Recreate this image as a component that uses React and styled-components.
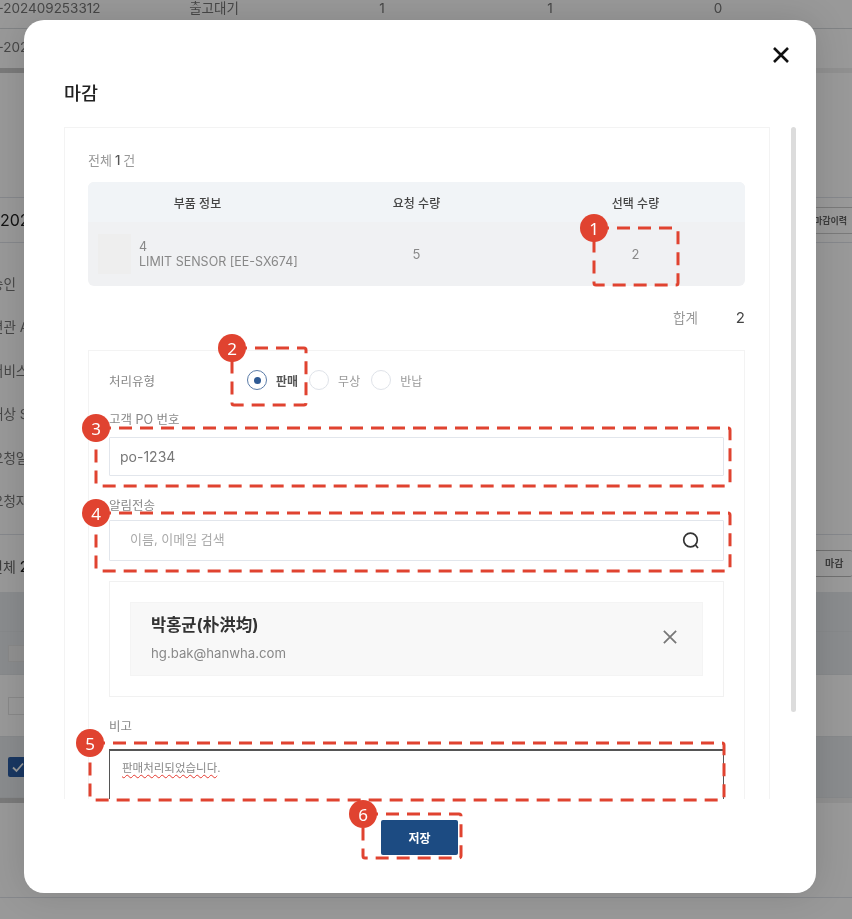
import React from "react";
import styled, { createGlobalStyle } from "styled-components";

const GlobalStyle = createGlobalStyle`
  html, body {
    margin: 0;
    padding: 0;
    background: #fff;
    font-family: Inter, "Noto Sans CJK KR", sans-serif;
  }
  * {
    box-sizing: border-box;
  }
`;

const Page = styled.div`
  position: relative;
  width: 852px;
  height: 919px;
  overflow: hidden;
  background: #fff;
  color: #777;
  filter: blur(0.35px);
`;

/* page behind the dialog */
const BgRow = styled.div`
  display: grid;
  grid-template-columns: repeat(5, 168px);
  align-items: start;
  justify-items: center;
  margin-left: -38px;
  height: ${(p) => p.$h}px;
  padding-top: ${(p) => p.$pt || 0}px;
  border-bottom: 1px solid #d8dade;
  font-size: 13.5px;
  line-height: 16px;
  color: #777;
`;

const BgCode = styled.span`
  margin-left: 6px;
`;

const BgScrollBand = styled.div`
  height: 5px;
  background: linear-gradient(90deg, #ccc 50%, #f0f0f0 50%);
  margin-top: ${(p) => (p.$overlap ? -5 : 0)}px;
`;

const BgSpacer = styled.div`
  height: ${(p) => p.$h}px;
`;

const BgHeading = styled.div`
  display: flex;
  align-items: center;
  justify-content: space-between;
  height: 46px;
  border-top: 1px solid #dfe3e9;
  border-bottom: 1px solid #dfe3e9;
  font-size: 16px;
  color: #222;
`;

const BgSmallButton = styled.span`
  display: flex;
  align-items: center;
  justify-content: flex-end;
  height: 27px;
  width: 60px;
  padding-right: 5px;
  border-top: 1px solid #ccc;
  border-bottom: 1px solid #ccc;
  font-size: 9px;
  font-weight: 600;
  color: #666;
`;

const BgInfoList = styled.div`
  display: flex;
  flex-direction: column;
  padding-top: 20px;
  height: 292px;
  border-bottom: 1px solid #dfe3e9;
`;

const BgInfoLabel = styled.div`
  height: 43.4px;
  line-height: 43.4px;
  margin-left: -9px;
  font-size: 13.5px;
  color: #777;
`;

const BgCount = styled.div`
  display: flex;
  align-items: center;
  justify-content: space-between;
  height: 57px;
  margin-left: -10px;
  padding-top: 5px;
  font-size: 14px;
  color: #666;
  b {
    color: #222;
    font-weight: 500;
  }
`;

const BgMarkButton = styled.span`
  width: 40px;
  height: 27px;
  margin-top: -5px;
  line-height: 25px;
  padding-left: 12px;
  border: 1px solid #bbb;
  border-right: 0;
  border-radius: 2px;
  font-size: 10px;
  font-weight: 600;
  color: #666;
`;

const BgTableRow = styled.div`
  display: flex;
  align-items: center;
  height: ${(p) => p.$h}px;
  padding-left: 8px;
  background: ${(p) => (p.$shade ? "#e6e9ed" : "#fff")};
  border-bottom: 1px solid #e2e4e8;
`;

const BgInputStub = styled.span`
  width: 40px;
  height: ${(p) => p.$h}px;
  background: ${(p) => (p.$filled ? "#f2f2f2" : "#fff")};
  border: 1px solid #e4e4e4;
`;

const BgCheck = styled.span`
  display: flex;
  align-items: center;
  justify-content: center;
  width: 20px;
  height: 20px;
  border-radius: 2px;
  background: #2a5da3;
`;

const BgBottomLine = styled.div`
  height: 95px;
  border-bottom: 1px solid #dfe3e9;
`;

const Dim = styled.div`
  position: absolute;
  inset: 0;
  background: rgba(0, 0, 0, 0.4);
`;

/* dialog */
const Modal = styled.div`
  position: absolute;
  left: 24px;
  top: 20px;
  display: flex;
  flex-direction: column;
  width: 792px;
  height: 873px;
  background: #fff;
  border-radius: 20px;
  box-shadow: 0 0 36px rgba(0, 0, 0, 0.14);
`;

const CloseButton = styled.button`
  position: absolute;
  right: 27px;
  top: 27px;
  display: flex;
  padding: 0;
  border: 0;
  background: none;
`;

const Title = styled.h2`
  height: 107px;
  margin: 0;
  padding: 59px 0 0 40px;
  font-size: 18.5px;
  line-height: 28px;
  font-weight: 500;
  color: #222;
`;

const ScrollArea = styled.div`
  display: flex;
  gap: 21px;
  height: 672px;
  margin-left: 40px;
  overflow: hidden;
`;

const Panel = styled.div`
  flex: none;
  width: 706px;
  padding: 22px 24px 0 23px;
  border: 1px solid #f3f3f3;
  border-bottom: 0;
`;

const ScrollThumb = styled.div`
  flex: none;
  width: 5px;
  height: 585px;
  border-radius: 3px;
  background: #dcdcdc;
`;

const CountLine = styled.div`
  margin-bottom: 12px;
  font-size: 13px;
  line-height: 20px;
  color: #999;
  b {
    margin: 0 3px;
    font-weight: 500;
    color: #555;
  }
`;

const Table = styled.div`
  width: 657px;
  border-radius: 6px;
  overflow: hidden;
  background: #f0f1f3;
`;

const HeadRow = styled.div`
  display: grid;
  grid-template-columns: repeat(3, 1fr);
  align-items: center;
  height: 40px;
  background: #f1f4f7;
  font-size: 12px;
  font-weight: 500;
  color: #444;
  text-align: center;
`;

const BodyRow = styled.div`
  display: grid;
  grid-template-columns: repeat(3, 1fr);
  align-items: center;
  height: 64px;
  font-size: 13px;
  color: #888;
  text-align: center;
`;

const PartCell = styled.div`
  display: flex;
  align-items: center;
  gap: 8px;
  padding-left: 10px;
  text-align: left;
  line-height: 15px;
  font-size: 12.5px;
`;

const PartThumb = styled.span`
  flex: none;
  width: 33px;
  height: 40px;
  background: #eeeeee;
`;

const PartText = styled.div`
  white-space: nowrap;
`;

const TotalRow = styled.div`
  display: flex;
  justify-content: flex-end;
  gap: 38px;
  width: 657px;
  margin: 22px 0;
  line-height: 20px;
  font-size: 13.5px;
  color: #999;
  b {
    font-size: 15px;
    font-weight: 400;
    color: #444;
  }
`;

const FormBox = styled.div`
  width: 657px;
  padding: 19px 20px 0;
  border: 1px solid #f3f3f3;
  border-bottom: 0;
`;

const TypeRow = styled.div`
  display: flex;
  align-items: center;
  height: 20px;
`;

const TypeLabel = styled.span`
  width: 138px;
  font-size: 12.5px;
  color: #888;
`;

const RadioOption = styled.label`
  display: flex;
  align-items: center;
  gap: 9px;
  margin-right: 11px;
  font-size: 12px;
  font-weight: ${(p) => (p.$checked ? 700 : 400)};
  color: ${(p) => (p.$checked ? "#555" : "#999")};
`;

const RadioMark = styled.span`
  display: flex;
  align-items: center;
  justify-content: center;
  width: 20px;
  height: 20px;
  border-radius: 50%;
  border: 1.5px solid ${(p) => (p.$checked ? "#5b7ca8" : "#dfe3e9")};
  &::after {
    content: "";
    display: ${(p) => (p.$checked ? "block" : "none")};
    width: 7px;
    height: 7px;
    border-radius: 50%;
    background: #2f5a94;
  }
`;

const FieldLabel = styled.div`
  margin-top: 21px;
  font-size: 12.5px;
  line-height: 18px;
  color: #888;
`;

const TextInput = styled.input`
  display: block;
  width: 100%;
  height: 39px;
  margin-top: 8px;
  padding: 0 10px;
  border: 1.5px solid #e2e6ec;
  border-radius: 1px;
  outline: none;
  background: #fff;
  font-family: inherit;
  font-size: 14px;
  color: #777;
`;

const SearchBox = styled.div`
  display: flex;
  align-items: center;
  justify-content: space-between;
  height: 41px;
  margin-top: 5px;
  padding: 0 22px 0 20px;
  border: 1.5px solid #e2e6ec;
  border-radius: 1px;
`;

const SearchInput = styled.input`
  flex: 1;
  border: 0;
  outline: none;
  padding: 0 0 3px;
  background: none;
  font-family: inherit;
  font-size: 13px;
  &::placeholder {
    color: #aaa;
    opacity: 1;
  }
`;

const RecipientBox = styled.div`
  margin-top: 20px;
  padding: 20px;
  border: 1px solid #f1f1f1;
`;

const RecipientCard = styled.div`
  display: flex;
  align-items: center;
  justify-content: space-between;
  height: 74px;
  padding: 0 25px 2px 20px;
  background: #f8f8f8;
  border: 1px solid #f4f4f4;
`;

const RecipientName = styled.div`
  font-size: 16.5px;
  line-height: 24px;
  font-weight: 700;
  color: #333;
`;

const RecipientMail = styled.div`
  margin-top: 6px;
  font-size: 13.2px;
  line-height: 20px;
  color: #888;
`;

const RecipientRemove = styled.span`
  display: flex;
  margin-bottom: 3px;
`;

const NoteLabel = styled(FieldLabel)`
  margin-bottom: 13px;
`;

const NoteArea = styled.div`
  height: 80px;
  padding: 8px 12px;
  border: 1.5px solid #555;
  border-top-width: 2px;
  font-size: 11.5px;
  line-height: 18px;
  color: #888;
`;

const SpellError = styled.span`
  text-decoration: underline wavy #e5392f 1.2px;
  text-underline-offset: 2px;
`;

const Footer = styled.div`
  display: flex;
  justify-content: center;
  padding: 21px 1px 0 0;
`;

const SaveButton = styled.button`
  width: 77px;
  height: 35px;
  border: 0;
  border-radius: 2px;
  background: #1c4b82;
  font-family: inherit;
  font-size: 12px;
  font-weight: 700;
  color: #fff;
`;

/* numbered red call-outs over the screenshot */
const CalloutFrame = styled.svg`
  position: absolute;
  left: ${(p) => p.$x}px;
  top: ${(p) => p.$y}px;
  overflow: visible;
`;

const CalloutBadge = styled.span`
  position: absolute;
  left: ${(p) => p.$x - 14}px;
  top: ${(p) => p.$y - 14}px;
  display: flex;
  align-items: center;
  justify-content: center;
  width: 28px;
  height: 28px;
  border-radius: 50%;
  background: #e04330;
  font-family: "Noto Sans", sans-serif;
  font-size: 17px;
  color: #fff;
`;

const callouts = [
  { n: 1, x: 594, y: 228, w: 84, h: 57 },
  { n: 2, x: 232, y: 348, w: 74, h: 57 },
  { n: 3, x: 96, y: 428, w: 634, h: 58 },
  { n: 4, x: 96, y: 513, w: 634, h: 58 },
  { n: 5, x: 90, y: 743, w: 634, h: 57 },
  { n: 6, x: 363, y: 814, w: 98, h: 44 },
];

const Callout = ({ n, x, y, w, h }) => (
  <>
    <CalloutFrame $x={x} $y={y} width={w} height={h}>
      <rect
        x="0"
        y="0"
        width={w}
        height={h}
        rx="2"
        fill="none"
        stroke="#e04330"
        strokeWidth="3"
        strokeDasharray="13 8"
      />
    </CalloutFrame>
    <CalloutBadge $x={x} $y={y}>
      {n}
    </CalloutBadge>
  </>
);

const CrossIcon = ({ size, weight, color }) => (
  <svg width={size} height={size} viewBox="0 0 16 16" fill="none">
    <path d="M1 1L15 15M15 1L1 15" stroke={color} strokeWidth={weight} />
  </svg>
);

const SearchIcon = () => (
  <svg width="20" height="20" viewBox="0 0 20 20" fill="none">
    <circle cx="9.5" cy="9" r="6.8" stroke="#333" strokeWidth="1.7" />
    <path d="M14.5 14L17 17" stroke="#333" strokeWidth="1.7" />
  </svg>
);

const Radio = ({ checked, children }) => (
  <RadioOption $checked={checked}>
    <RadioMark $checked={checked} />
    {children}
  </RadioOption>
);

export default function App() {
  return (
    <Page>
      <GlobalStyle />

      <BgRow $h={29}>
        <BgCode>-202409253312</BgCode>
        <span>출고대기</span>
        <span>1</span>
        <span>1</span>
        <span>0</span>
      </BgRow>
      <BgRow $h={44} $pt={10}>
        <BgCode>-202409253312</BgCode>
      </BgRow>
      <BgScrollBand $overlap />
      <BgSpacer $h={124} />
      <BgHeading>
        <span>2024</span>
        <BgSmallButton>마감이력</BgSmallButton>
      </BgHeading>
      <BgInfoList>
        <BgInfoLabel>승인</BgInfoLabel>
        <BgInfoLabel>연관 A</BgInfoLabel>
        <BgInfoLabel>서비스</BgInfoLabel>
        <BgInfoLabel>대상 S</BgInfoLabel>
        <BgInfoLabel>요청일</BgInfoLabel>
        <BgInfoLabel>요청자</BgInfoLabel>
      </BgInfoList>
      <BgCount>
        <span>
          전체 <b>2</b>
        </span>
        <BgMarkButton>마감</BgMarkButton>
      </BgCount>
      <BgTableRow $h={40} $shade />
      <BgTableRow $h={43} $shade>
        <BgInputStub $h={17} $filled />
      </BgTableRow>
      <BgTableRow $h={62}>
        <BgInputStub $h={18} />
      </BgTableRow>
      <BgTableRow $h={61} $shade>
        <BgCheck>
          <svg width="14" height="14" viewBox="0 0 14 14" fill="none">
            <path d="M2 7.5L5.5 11L12 3.5" stroke="#fff" strokeWidth="1.8" />
          </svg>
        </BgCheck>
      </BgTableRow>
      <BgScrollBand />
      <BgBottomLine />

      <Dim />

      <Modal>
        <CloseButton>
          <CrossIcon size={16} weight={2.6} color="#111" />
        </CloseButton>
        <Title>마감</Title>
        <ScrollArea>
          <Panel>
            <CountLine>
              전체<b>1</b>건
            </CountLine>
            <Table>
              <HeadRow>
                <span>부품 정보</span>
                <span>요청 수량</span>
                <span>선택 수량</span>
              </HeadRow>
              <BodyRow>
                <PartCell>
                  <PartThumb />
                  <PartText>
                    4
                    <br />
                    LIMIT SENSOR [EE-SX674]
                  </PartText>
                </PartCell>
                <span>5</span>
                <span>2</span>
              </BodyRow>
            </Table>
            <TotalRow>
              <span>합계</span>
              <b>2</b>
            </TotalRow>
            <FormBox>
              <TypeRow>
                <TypeLabel>처리유형</TypeLabel>
                <Radio checked>판매</Radio>
                <Radio>무상</Radio>
                <Radio>반납</Radio>
              </TypeRow>
              <FieldLabel>고객 PO 번호</FieldLabel>
              <TextInput readOnly value="po-1234" />
              <FieldLabel>알림전송</FieldLabel>
              <SearchBox>
                <SearchInput readOnly placeholder="이름, 이메일 검색" />
                <SearchIcon />
              </SearchBox>
              <RecipientBox>
                <RecipientCard>
                  <div>
                    <RecipientName>박홍균(朴洪均)</RecipientName>
                    <RecipientMail>hg.bak@hanwha.com</RecipientMail>
                  </div>
                  <RecipientRemove>
                    <CrossIcon size={14} weight={2} color="#777" />
                  </RecipientRemove>
                </RecipientCard>
              </RecipientBox>
              <NoteLabel>비고</NoteLabel>
              <NoteArea>
                <SpellError>판매처리되었습니다</SpellError>.
              </NoteArea>
            </FormBox>
          </Panel>
          <ScrollThumb />
        </ScrollArea>
        <Footer>
          <SaveButton>저장</SaveButton>
        </Footer>
      </Modal>

      {callouts.map((c) => (
        <Callout key={c.n} {...c} />
      ))}
    </Page>
  );
}
